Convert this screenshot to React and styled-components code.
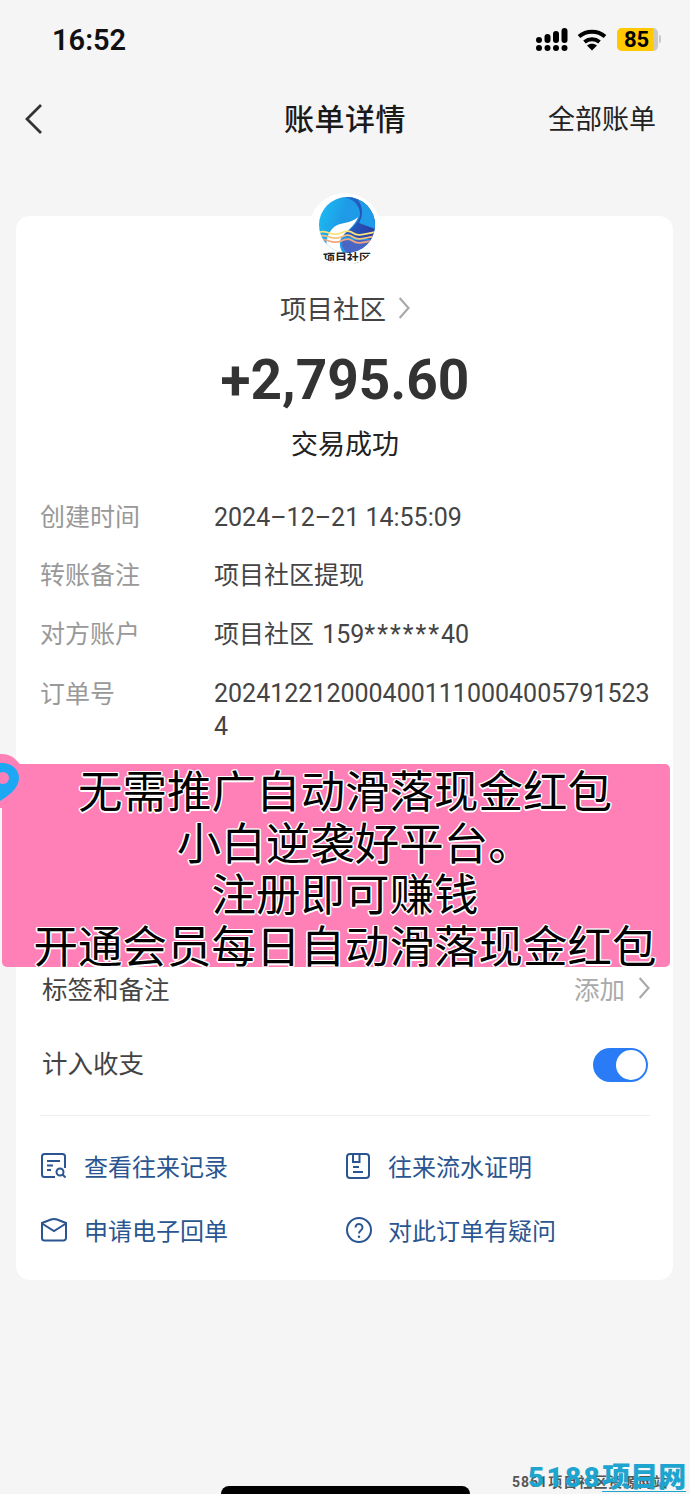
import styled, { createGlobalStyle } from "styled-components";

const GlobalStyle = createGlobalStyle`
  html, body {
    margin: 0;
    padding: 0;
    background: #f5f5f5;
  }
  * {
    box-sizing: border-box;
  }
`;

const FONT = `Roboto, "Noto Sans CJK SC", sans-serif`;

const Page = styled.div`
  position: relative;
  width: 690px;
  height: 1494px;
  overflow: hidden;
  background: #f5f5f5;
  font-family: ${FONT};
  color: #333;
`;

const StatusBar = styled.div`
  display: flex;
  align-items: center;
  justify-content: space-between;
  height: 78px;
  padding: 0 29px 0 52px;
`;

const Clock = styled.div`
  margin-top: 1px;
  font-size: 29px;
  font-weight: 600;
  color: #111;
`;

const StatusIcons = styled.div`
  display: flex;
  align-items: center;
  gap: 9px;
`;

const Battery = styled.div`
  display: flex;
  align-items: center;
  gap: 1px;
  margin-left: 1px;
`;

const BatteryBody = styled.div`
  display: flex;
  width: 41px;
  height: 23px;
  border-radius: 5px;
  overflow: hidden;
  background: #c8c8c8;
`;

const BatteryFill = styled.div`
  display: flex;
  align-items: center;
  justify-content: center;
  width: 36px;
  background: #ffc800;
  color: #000;
  font-size: 22px;
  line-height: 23px;
  font-weight: 700;
  padding-left: 3px;
`;

const BatteryCap = styled.div`
  width: 2px;
  height: 8px;
  border-radius: 0 2px 2px 0;
  background: #c8c8c8;
`;

const NavBar = styled.div`
  display: grid;
  grid-template-columns: 1fr auto 1fr;
  align-items: center;
  height: 82px;
  padding: 0 34px;
`;

const BackButton = styled.div`
  display: flex;
  align-items: center;
  margin-left: -10px;
`;

const NavTitle = styled.div`
  height: 40px;
  font-size: 30px;
  line-height: 42px;
  font-weight: 500;
  color: #1a1a1a;
  letter-spacing: 0.5px;
`;

const NavAction = styled.div`
  justify-self: end;
  height: 40px;
  font-size: 27px;
  line-height: 42px;
  color: #222;
`;

const Card = styled.div`
  display: flex;
  flex-direction: column;
  width: 657px;
  height: 1064px;
  margin: 56px 0 0 16px;
  padding: 0 23px 0 24px;
  background: #fff;
  border-radius: 14px;
`;

const Avatar = styled.div`
  align-self: center;
  width: 72px;
  height: 72px;
  margin-top: -23px;
  border-radius: 50%;
  background: #fff;
  overflow: hidden;
`;

const Merchant = styled.div`
  display: flex;
  align-items: center;
  justify-content: center;
  gap: 11px;
  height: 36px;
  margin-top: 24px;
  font-size: 26.5px;
  color: #444;
`;

const MerchantChevron = styled.span`
  display: flex;
  margin: 2px 0 0 1px;
`;

const Amount = styled.div`
  height: 70px;
  margin-top: 20px;
  text-align: center;
  font-size: 55px;
  line-height: 70px;
  font-weight: 700;
  color: #333;
`;

const Status = styled.div`
  height: 40px;
  margin-top: 10px;
  text-align: center;
  font-size: 27px;
  line-height: 40px;
  color: #222;
`;

const DetailList = styled.div`
  display: flex;
  flex-direction: column;
  gap: 22.5px;
  margin-top: 34.5px;
`;

const DetailRow = styled.div`
  display: grid;
  grid-template-columns: 174px 436px;
  margin-top: ${(p) => (p.$long ? "2px" : "0")};
  font-size: 25px;
  line-height: 36px;
`;

const DetailLabel = styled.div`
  color: #999;
`;

const DetailValue = styled.div`
  color: #444;
  word-break: break-all;
  word-spacing: ${(p) => (p.$wide ? "2px" : "0")};
  line-height: ${(p) => (p.$long ? "33px" : "36px")};
`;

const Masked = styled.span`
  letter-spacing: 2px;
`;

const OptionRow = styled.div`
  display: flex;
  align-items: center;
  justify-content: space-between;
  height: 40px;
  margin-top: ${(p) => p.$top}px;
  padding-left: 2px;
  font-size: 25.5px;
  color: #444;
`;

const OptionHint = styled.div`
  display: flex;
  align-items: center;
  gap: 13px;
  color: #aaa;
`;

const Toggle = styled.div`
  display: flex;
  align-items: center;
  justify-content: flex-end;
  width: 55px;
  height: 34px;
  margin: 6px 2px 0 0;
  padding: 2px;
  border-radius: 17px;
  background: #2a7cf6;
`;

const ToggleKnob = styled.div`
  width: 30px;
  height: 30px;
  border-radius: 50%;
  background: #fff;
`;

const Divider = styled.div`
  height: 1px;
  margin-top: 33px;
  background: #eee;
`;

const LinkGrid = styled.div`
  display: grid;
  grid-template-columns: 304px 1fr;
  row-gap: 28px;
  margin-top: 32px;
`;

const LinkItem = styled.div`
  display: flex;
  align-items: center;
  gap: 16px;
  height: 36px;
  font-size: 24px;
  color: #2a5590;
`;

const Banner = styled.div`
  position: absolute;
  left: 2px;
  top: 764px;
  width: 668px;
  height: 203px;
  padding: 4px 0 0 18px;
  overflow: hidden;
  border-radius: 5px;
  background: #ff80b7;
  text-align: center;
  font-size: 44.5px;
  line-height: 51.5px;
  font-weight: 400;
  color: #000;
  text-shadow: -1.5px 0 0 #fff, 1.5px 0 0 #fff, 0 -1.5px 0 #fff, 0 1.5px 0 #fff,
    -1px -1px 0 #fff, 1px -1px 0 #fff, -1px 1px 0 #fff, 1px 1px 0 #fff;
`;

const BannerLine = styled.div`
  display: flex;
  justify-content: center;
  white-space: nowrap;
`;

const BannerStop = styled.span`
  letter-spacing: -19.5px;
`;

const Pin = styled.svg`
  position: absolute;
  left: 0;
  top: 754px;
`;

const HomeBar = styled.div`
  position: absolute;
  left: 221px;
  top: 1486px;
  width: 249px;
  height: 16px;
  border-radius: 8px;
  background: #000;
`;

const WatermarkBack = styled.div`
  position: absolute;
  left: 512px;
  top: 1471px;
  font-size: 14px;
  font-weight: 700;
  color: #555;
  letter-spacing: 1px;
  white-space: nowrap;
`;

const Watermark = styled.div`
  position: absolute;
  left: 528px;
  top: 1463px;
  display: flex;
  align-items: flex-start;
  height: 29px;
  font-size: 28px;
  line-height: 30px;
  font-weight: 900;
  color: #1da4cf;
  white-space: nowrap;
`;

const WatermarkDigits = styled.span`
  letter-spacing: 2.3px;
`;

const WatermarkName = styled.span`
  height: 29px;
  border-bottom: 1px solid #1da4cf;
`;

const SignalIcon = () => (
  <svg width="32" height="23" viewBox="0 0 32 23" fill="#000">
    <rect x="0" y="9" width="6" height="6" rx="3" />
    <rect x="8.500" y="6" width="6" height="9" rx="3" />
    <rect x="17" y="3" width="6" height="12" rx="3" />
    <rect x="25.500" y="0" width="6" height="15" rx="3" />
    <rect x="0" y="17" width="6" height="6" rx="3" />
    <rect x="8.500" y="17" width="6" height="6" rx="3" />
    <rect x="17" y="17" width="6" height="6" rx="3" />
    <rect x="25.500" y="17" width="6" height="6" rx="3" />
  </svg>
);

const WifiIcon = () => (
  <svg width="30" height="23" viewBox="0 0 30 23" fill="none" stroke="#000" strokeWidth="4">
    <path d="M2 8.500c7.500-6.500 18.500-6.500 26 0" />
    <path d="M7.500 14c4.400-3.600 10.600-3.600 15 0" />
    <path d="M15 22.500l-5-5c2.900-2.200 7.100-2.200 10 0z" fill="#000" stroke="none" />
  </svg>
);

const Chevron = ({ color, height = 22 }) => (
  <svg width={height * 0.55} height={height} viewBox="0 0 11 20" fill="none" stroke={color} strokeWidth="2">
    <path d="M1.500 1l8 9-8 9" />
  </svg>
);

const Logo = () => (
  <svg width="72" height="72" viewBox="0 0 72 72">
    <defs>
      <linearGradient id="logoBase" x1="0" y1="0" x2="1" y2="0.3">
        <stop offset="0" stopColor="#1cc0f2" />
        <stop offset="0.5" stopColor="#1f9ae6" />
        <stop offset="1" stopColor="#1d9ce8" />
      </linearGradient>
      <linearGradient id="logoDark" x1="0" y1="0" x2="1" y2="0.4">
        <stop offset="0" stopColor="#1c78d8" />
        <stop offset="1" stopColor="#2b3fa6" />
      </linearGradient>
      <clipPath id="logoDisc">
        <circle cx="38" cy="32" r="28" />
      </clipPath>
    </defs>
    <g clipPath="url(#logoDisc)">
      <rect x="10" y="4" width="56" height="56" fill="url(#logoBase)" />
      <path d="M30 4c10-1 21 6 21 17 0 9-12 17-18 22l34 4V4z" fill="url(#logoDark)" />
      <path d="M46 4c10 3 18 10 20 20v12L50 30c5-9 4-19-4-26z" fill="#1f9be8" />
      <path d="M18 60c-2-10 0-20 7-26 6-5 17-3 24-10-3 9-12 14-16 20-3 4-3 10 1 16z" fill="#fff" />
      <path d="M33 47h33v13H38c-4-4-6-8-5-13z" fill="#4a66c4" />
      <g fill="none" strokeWidth="1.800">
        <path d="M9 40c5-3 8-1 11 0s8 2 12 0 8-3 12 0 8 2 22-1" stroke="#fbe27a" />
        <path d="M9 44c5-3 8-1 11 0s8 2 12 0 8-3 12 0 8 2 22-1" stroke="#f8c27a" />
        <path d="M9 48c5-3 8-1 11 0s8 2 12 0 8-3 12 0 8 2 22-1" stroke="#f2a67c" />
      </g>
    </g>
    <text x="38" y="70" textAnchor="middle" fontSize="12" fontWeight="700" fill="#222" fontFamily="Noto Sans CJK SC, sans-serif">
      项目社区
    </text>
    <rect x="0" y="68" width="72" height="4" fill="#fff" />
  </svg>
);

const RecordIcon = () => (
  <svg width="28" height="28" viewBox="0 0 28 28" fill="none" stroke="#2a5590" strokeWidth="2">
    <path d="M15 25H4.500A2.500 2.500 0 0 1 2 22.500V4.500A2.500 2.500 0 0 1 4.500 2h18A2.500 2.500 0 0 1 25 4.500V16" />
    <path d="M7 9h13M7 13.500h6M7 18h4" />
    <circle cx="20" cy="20" r="3.500" />
    <path d="M22.500 22.500l3 3" />
  </svg>
);

const FileIcon = () => (
  <svg width="28" height="28" viewBox="0 0 28 28" fill="none" stroke="#2a5590" strokeWidth="2">
    <rect x="3" y="2" width="22" height="24" rx="3" />
    <path d="M9 2v8h6.500V2M9 15h6M9 20h10" />
  </svg>
);

const MailIcon = () => (
  <svg width="28" height="28" viewBox="0 0 28 28" fill="none" stroke="#2a5590" strokeWidth="2">
    <path d="M2 7l9-3.500a8 8 0 0 1 6 0L26 7v15a2.500 2.500 0 0 1-2.500 2.500h-19A2.500 2.500 0 0 1 2 22z" />
    <path d="M2 7.500l12 7.500 12-7.500" />
  </svg>
);

const HelpIcon = () => (
  <svg width="28" height="28" viewBox="0 0 28 28" fill="none" stroke="#2a5590" strokeWidth="2">
    <circle cx="15" cy="14" r="12" />
    <path d="M11.500 11.500a3.500 3.500 0 1 1 5.500 2.800c-1.300 1-2 1.600-2 3.200" />
    <circle cx="15" cy="20.800" r="1.200" fill="#2a5590" stroke="none" />
  </svg>
);

const details = [
  { label: "创建时间", value: "2024–12–21 14:55:09" },
  { label: "转账备注", value: "项目社区提现" },
  {
    label: "对方账户",
    wide: true,
    value: (
      <>
        项目社区 159<Masked>******</Masked>40
      </>
    ),
  },
  { label: "订单号", value: "20241221200040011100040057915234", long: true },
];

const links = [
  { icon: <RecordIcon />, text: "查看往来记录" },
  { icon: <FileIcon />, text: "往来流水证明" },
  { icon: <MailIcon />, text: "申请电子回单" },
  { icon: <HelpIcon />, text: "对此订单有疑问" },
];

export default function App() {
  return (
    <Page>
      <GlobalStyle />
      <StatusBar>
        <Clock>16:52</Clock>
        <StatusIcons>
          <SignalIcon />
          <WifiIcon />
          <Battery>
            <BatteryBody>
              <BatteryFill>85</BatteryFill>
            </BatteryBody>
            <BatteryCap />
          </Battery>
        </StatusIcons>
      </StatusBar>

      <NavBar>
        <BackButton>
          <svg width="20" height="32" viewBox="0 0 20 32" fill="none" stroke="#333" strokeWidth="2.800">
            <path d="M17 2L3 16l14 14" />
          </svg>
        </BackButton>
        <NavTitle>账单详情</NavTitle>
        <NavAction>全部账单</NavAction>
      </NavBar>

      <Card>
        <Avatar>
          <Logo />
        </Avatar>
        <Merchant>
          项目社区
          <MerchantChevron>
            <Chevron color="#aaa" />
          </MerchantChevron>
        </Merchant>
        <Amount>+2,795.60</Amount>
        <Status>交易成功</Status>

        <DetailList>
          {details.map((row) => (
            <DetailRow key={row.label} $long={row.long}>
              <DetailLabel>{row.label}</DetailLabel>
              <DetailValue $long={row.long} $wide={row.wide}>
                {row.value}
              </DetailValue>
            </DetailRow>
          ))}
        </DetailList>

        <OptionRow $top={224.5}>
          标签和备注
          <OptionHint>
            添加
            <Chevron color="#aaa" />
          </OptionHint>
        </OptionRow>
        <OptionRow $top={34}>
          计入收支
          <Toggle>
            <ToggleKnob />
          </Toggle>
        </OptionRow>
        <Divider />

        <LinkGrid>
          {links.map((link) => (
            <LinkItem key={link.text}>
              {link.icon}
              {link.text}
            </LinkItem>
          ))}
        </LinkGrid>
      </Card>

      <Banner>
        <BannerLine>无需推广自动滑落现金红包</BannerLine>
        <BannerLine>
          小白逆袭好平台<BannerStop>。</BannerStop>
        </BannerLine>
        <BannerLine>注册即可赚钱</BannerLine>
        <BannerLine>开通会员每日自动滑落现金红包</BannerLine>
      </Banner>
      <Pin width="24" height="56" viewBox="0 0 24 56">
        <path d="M0 0h2a22 26 0 0 1 0 54H0z" fill="#ff80b7" />
        <path d="M0 9c11-1 19 6 19 15 0 8-7 16-19 23z" fill="#1ea7f2" />
        <circle cx="3" cy="24" r="6" fill="#ff80b7" />
      </Pin>

      <HomeBar />
      <WatermarkBack>5861项目社区资源网站</WatermarkBack>
      <Watermark>
        <WatermarkDigits>5188</WatermarkDigits>
        <WatermarkName>项目网</WatermarkName>
      </Watermark>
    </Page>
  );
}
